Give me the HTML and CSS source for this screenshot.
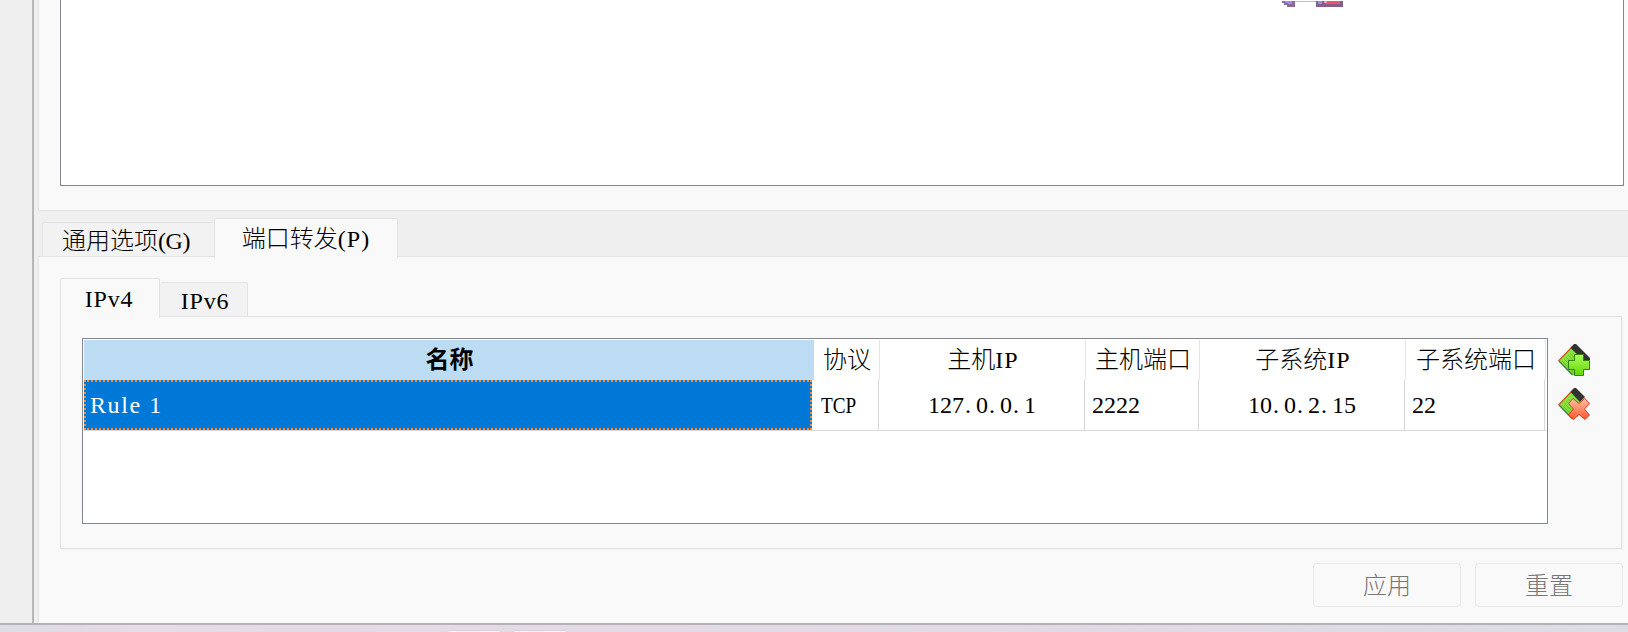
FILE: index.html
```html
<!DOCTYPE html>
<html lang="zh-CN">
<head>
<meta charset="utf-8">
<title>端口转发</title>
<link rel="stylesheet" href="styles.css">
</head>
<body>
<div class="window">
  <aside class="sidebar"></aside>
  <main class="content">
    <section class="top-panel">
      <div class="list-box">
        <svg class="sprite" width="70" height="7" viewBox="0 0 70 7" shape-rendering="crispEdges">
          <path d="M0 0H15V6H7V4H4V2H2V0z" fill="#8d6b95"/><path d="M5 0H12V3H8V2H5z" fill="#a788ee"/>
          <path d="M15 0H37V1H15z" fill="#c5bcc9"/><path d="M36 0H63V6H36z" fill="#865f86"/>
          <path d="M38 0H42V3H38z" fill="#a788ee"/><path d="M45 0H60V3H45z" fill="#ef526f"/><path d="M44 0H47V2H44z" fill="#fc91b0"/>
        </svg>
      </div>
    </section>
    <nav class="tabs main-tabs">
      <div class="tab tab-general"><span>通用选项<span class="latin-g">(G)</span></span></div>
      <div class="tab tab-forward active"><span>端口转发<span class="latin-p">(P)</span></span></div>
    </nav>
    <section class="forward-panel">
      <nav class="tabs ip-tabs">
        <div class="tab tab-v4 active"><span class="ip">IPv4</span></div>
        <div class="tab tab-v6"><span class="ip">IPv6</span></div>
      </nav>
      <div class="ip-panel">
        <div class="rules">
          <div class="row head">
            <div class="selected">名称</div>
            <div>协议</div>
            <div>主机<span class="abbr">IP</span></div>
            <div>主机端口</div>
            <div>子系统<span class="abbr">IP</span></div>
            <div>子系统端口</div>
          </div>
          <div class="row body">
            <div class="selected">Rule 1</div>
            <div class="proto"><span>TCP</span></div>
            <div class="address">127<i>.</i>0<i>.</i>0<i>.</i>1</div>
            <div class="port">2222</div>
            <div class="address">10<i>.</i>0<i>.</i>2<i>.</i>15</div>
            <div class="port">22</div>
          </div>
        </div>
        <div class="tools">
          <svg width="32" height="32" viewBox="0 0 32 32">
            <defs>
              <linearGradient id="leaf" x1="0" y1="0" x2="1" y2="1"><stop offset="0" stop-color="#9bea4c"/><stop offset="1" stop-color="#6ad02c"/></linearGradient>
              <linearGradient id="plus" x1="0" y1="0" x2="0" y2="1"><stop offset="0" stop-color="#a9ff62"/><stop offset="1" stop-color="#64d400"/></linearGradient>
              <linearGradient id="cross" x1="0" y1="0" x2="0" y2="1"><stop offset="0" stop-color="#ffc2a2"/><stop offset="1" stop-color="#ff5630"/></linearGradient>
            </defs>
            <path d="M16 1L1 17L14 31H20L31 17L19 2z" fill="url(#leaf)"/>
            <path d="M4 17L17 30M6 15L20 29M8 13L22 27M10 11L24 25M12 9L26 23" stroke="#5dbb2c" stroke-width=".7"/>
            <path d="M1 17L14.500 31" stroke="#398332" stroke-width="1.300"/>
            <path d="M.5 17L15 2" stroke="#d94d22" stroke-width="1.300"/>
            <path d="M12.500 4L16 0H18L32 14V16H25z" fill="#303331"/>
            <path d="M16.500 10.500H25.500V16.500H31.500V25.500H25.500V31.500H16.500V25.500H10.500V16.500H16.500z" fill="url(#plus)" stroke="#377f0b"/>
          </svg>
          <svg width="32" height="32" viewBox="0 0 32 32">
            <path d="M16 1L1 17L14 31L25 17L19 2z" fill="url(#leaf)"/>
            <path d="M4 17L17 30M6 15L20 29M8 13L22 27M10 11L24 25" stroke="#5dbb2c" stroke-width=".7"/>
            <path d="M1 17L14.500 31" stroke="#398332" stroke-width="1.300"/>
            <path d="M.5 17L15 2" stroke="#d94d22" stroke-width="1.300"/>
            <path d="M12.500 4L16 0H18L27 9L22 14z" fill="#303331"/>
            <path d="M15 10.500L21 15.500L26.500 10.500L31.500 15.500L26.500 21L31.500 27L27 31.500L21 26.500L15.500 31.500L10.500 27L15.500 21L10.500 15.500z" fill="url(#cross)" stroke="#e2401f" stroke-linejoin="round"/>
          </svg>
        </div>
      </div>
      <div class="actions">
        <button disabled>应用</button>
        <button disabled>重置</button>
      </div>
    </section>
  </main>
</div>
<footer class="desktop"><span></span><span></span></footer>
</body>
</html>
```
FILE: styles.css
```css
* { box-sizing: border-box; }
body { margin: 0; width: 1628px; height: 632px; overflow: hidden; background: #efefef; color: #000; font: 300 24px/30px "Liberation Serif", "Noto Sans CJK SC", serif; white-space: nowrap; font-variant-ligatures: none; }
.window { display: flex; height: 625px; border-bottom: 2px solid #b3b3b6; }
.sidebar { width: 34px; flex: none; border-right: 2px solid #b6b6b6; }
.content { flex: 1; min-width: 0; padding-left: 4px; display: flex; flex-direction: column; }
.top-panel { height: 211px; flex: none; padding: 0 4px 0 21px; background: #f9f9f9; border: solid #e3e3e3; border-width: 0 0 1px 1px; }
.list-box { height: 186px; background: #fff; border: 1px solid #828790; border-top: 0; padding-left: 1219px; line-height: 0; }
.tabs { display: flex; align-items: flex-end; position: relative; }
.tab { display: flex; justify-content: center; align-items: center; height: 34px; background: #f2f2f2; border: 1px solid #e3e3e3; border-bottom: 0; border-radius: 2px 2px 0 0; }
.tab.active { background: #f9f9f9; margin-bottom: -2px; height: 40px; }
.main-tabs { height: 45px; padding-left: 4px; z-index: 1; }
.tab-general { width: 172px; border-right: 0; padding: 2px 5px 0 0; }
.tab-forward { width: 184px; padding: 1px 0 0; }
.latin-g { letter-spacing: -0.4px; }
.latin-p { letter-spacing: 1px; }
.forward-panel { flex: 1; display: flex; flex-direction: column; background: #f9f9f9; border: solid #e3e3e3; border-width: 1px 0 0 1px; padding: 21px 5px 0 21px; }
.ip-tabs { height: 38px; z-index: 1; }
.tab-v4 { width: 100px; padding-right: 2px; }
.tab-v6 { width: 88px; border-left: 0; padding-left: 3px; padding-top: 3px; }
.ip { letter-spacing: 0.8px; }
.ip-panel { height: 233px; width: 1562px; display: flex; gap: 10px; padding: 21px 0 0 21px; border: 1px solid #e3e3e3; box-shadow: 1px 1px #f2f2f2; }
.rules { width: 1466px; height: 186px; padding: 1px; background: #fff; border: 1px solid #828790; }
.row { display: grid; }
.row > div { border-right: 1px solid #d8d8d8; }
.head { height: 40px; grid-template-columns: 730px 66px 206px 114px 206px 140px; text-align: center; line-height: 41px; }
.head > div { border-color: #e5e5e5; height: 40px; padding-left: 1px; }
.head .selected { background: #bcdcf4; font-weight: 700; border: 0; }
.abbr { letter-spacing: 1px; }
.body { height: 51px; grid-template-columns: 729px 66px 206px 114px 206px 140px; line-height: 50px; border-bottom: 1px solid #d8d8d8; }
.body .selected { padding-left: 4px; color: #fff; letter-spacing: 1.6px; background: #0078d7; border: 2px dotted #ff8a32; line-height: 46px; margin-right: 1px; }
.proto { padding-left: 8px; }
.proto span { display: inline-block; transform: scaleX(.8); transform-origin: left; }
.address { text-align: center; padding-left: 1px; }
.address i { font-style: normal; letter-spacing: 5px; margin-left: 1px; }
.port { padding-left: 7px; }
.tools { display: flex; flex-direction: column; gap: 12px; padding-top: 6px; }
.actions { display: flex; justify-content: flex-end; gap: 14px; padding-top: 14px; }
button { width: 148px; height: 44px; padding: 2px 0 0; font: inherit; color: #777; background: #f9f9f9; border: 1px solid #e8e8e8; border-radius: 4px; }
.desktop { height: 7px; display: flex; gap: 12px; padding: 5px 0 0 447px; background: linear-gradient(90deg, #dddce4, #e6dbe8 8%, #e2dae6 60%, #dddce5); }
.desktop span { width: 54px; height: 3px; border-radius: 3px 3px 0 0; background: #f6f3f7; border-top: 1px solid #d8d0dc; }
```
